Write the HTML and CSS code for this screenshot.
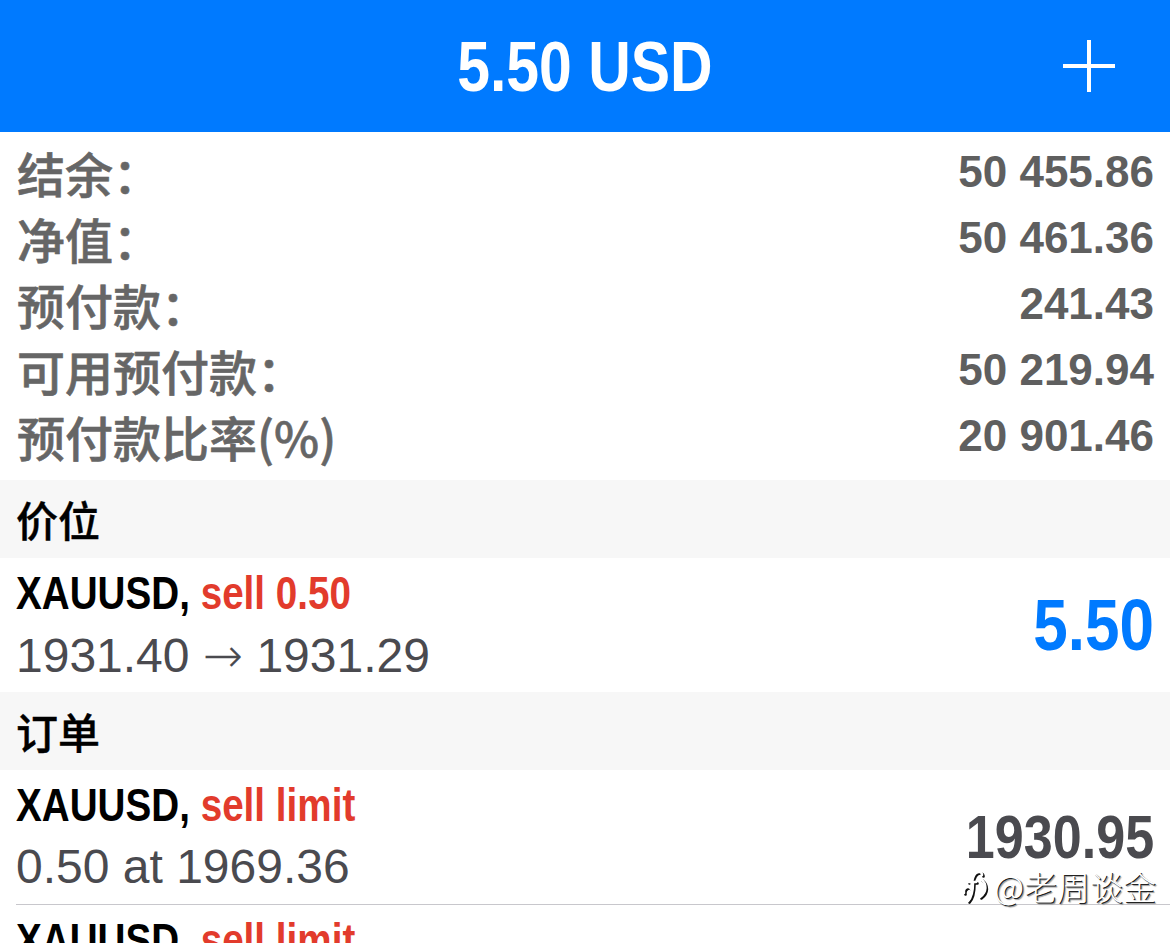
FILE: index.html
```html
<!DOCTYPE html>
<html lang="zh-CN">

<head>
    <meta charset="UTF-8">
    <title>交易</title>
    <link rel="stylesheet" href="styles.css">
</head>

<body>
    <div class="app">
        <header class="topbar">
            <div></div>
            <h1 class="topbar-title">5.50 USD</h1>
            <button class="add-btn" type="button">
                <svg width="56" height="56" viewBox="0 0 56 56">
                    <path d="M28 2 V54 M2 28 H54" stroke="#fff" stroke-width="4" fill="none" />
                </svg>
            </button>
        </header>

        <section class="summary">
            <div class="summary-row"><span class="label">结余：</span><span class="value">50 455.86</span></div>
            <div class="summary-row"><span class="label">净值：</span><span class="value">50 461.36</span></div>
            <div class="summary-row"><span class="label">预付款：</span><span class="value">241.43</span></div>
            <div class="summary-row"><span class="label">可用预付款：</span><span class="value">50 219.94</span></div>
            <div class="summary-row"><span class="label">预付款比率(%)</span><span class="value">20 901.46</span></div>
        </section>

        <div class="section-title">价位</div>
        <div class="trade-list">
            <div class="trade-row">
                <div class="trade-body">
                    <div class="trade-info">
                        <div class="trade-head"><span class="symbol">XAUUSD,</span> <span class="side">sell 0.50</span></div>
                        <div class="trade-sub">1931.40 <span class="arrow">→</span> 1931.29</div>
                    </div>
                    <div class="trade-value profit">5.50</div>
                </div>
            </div>
        </div>

        <div class="section-title">订单</div>
        <div class="trade-list">
            <div class="trade-row">
                <div class="trade-body">
                    <div class="trade-info">
                        <div class="trade-head"><span class="symbol">XAUUSD,</span> <span class="side">sell limit</span></div>
                        <div class="trade-sub">0.50 at 1969.36</div>
                    </div>
                    <div class="trade-value">1930.95</div>
                </div>
            </div>
            <div class="trade-row">
                <div class="trade-body">
                    <div class="trade-info">
                        <div class="trade-head"><span class="symbol">XAUUSD,</span> <span class="side">sell limit</span></div>
                        <div class="trade-sub">0.50 at 1975.20</div>
                    </div>
                    <div class="trade-value">1930.95</div>
                </div>
            </div>
        </div>

        <!-- watermark over the list -->
        <div class="watermark">
            <svg width="30" height="36" viewBox="0 0 30 36">
                <g fill="none" stroke-linecap="round" stroke-width="2.6">
                    <path d="M4 25 C3 19 9 17 11 21 M11 21 C12 14 12 8 16 5 C19 3 22 4 22 7 M8 14 H16 M13 14 C13 22 12 29 8 33 M21 11 C27 16 27 24 20 29"
                        stroke="#111" transform="translate(1.5 1.5)" />
                    <path d="M4 25 C3 19 9 17 11 21 M11 21 C12 14 12 8 16 5 C19 3 22 4 22 7 M8 14 H16 M13 14 C13 22 12 29 8 33 M21 11 C27 16 27 24 20 29"
                        stroke="#fff" />
                </g>
            </svg>
            <span>@老周谈金</span>
        </div>
    </div>
</body>

</html>
```

FILE: styles.css
```css
html,
body {
    margin: 0;
    height: 100%;
    overflow: hidden;
}

body {
    background: #fff;
    font-family: "Liberation Sans", Arial, "Noto Sans CJK SC", sans-serif;
}

.app {
    position: relative;
    height: 100%;
}

.topbar {
    display: grid;
    grid-template-columns: 1fr auto 1fr;
    align-items: center;
    height: 132px;
    background-color: #007aff;
    /* iOS blue */
}

/* no condensed face installed, so squeeze the bold one */
.topbar-title {
    margin: 0;
    color: #fff;
    font-weight: bold;
    font-size: 71px;
    transform: scaleX(0.83);
}

.add-btn {
    justify-self: end;
    margin-right: 53px;
    padding: 0;
    border: none;
    background: none;
    display: flex;
}

.summary {
    padding: 7px 16px 11px 17px;
}

.summary-row {
    display: flex;
    justify-content: space-between;
    align-items: center;
    height: 66px;
}

.label {
    font-family: "Noto Sans CJK SC", sans-serif;
    font-weight: 500;
    font-size: 48px;
    color: #666;
    -webkit-text-stroke: 0.6px #666;
}

.value {
    font-weight: bold;
    font-size: 44px;
    color: #5f5f5f;
}

.section-title {
    height: 78px;
    line-height: 78px;
    padding-left: 16px;
    background-color: #f7f7f7;
    font-family: "Noto Sans CJK SC", sans-serif;
    font-weight: 500;
    font-size: 42px;
    color: #000;
    -webkit-text-stroke: 0.4px #000;
}

.trade-row {
    padding-left: 16px;
}

.trade-body {
    display: flex;
    justify-content: space-between;
    align-items: center;
    padding: 4px 16px 6px 0;
}

.trade-row+.trade-row .trade-body {
    border-top: 1px solid #c8c7cc;
}

.trade-head {
    height: 62px;
    line-height: 62px;
    font-weight: bold;
    font-size: 46px;
    white-space: nowrap;
    transform: scaleX(0.84);
    transform-origin: left center;
}

.symbol {
    color: #000;
}

.side {
    color: #e23b2c;
}

.trade-sub {
    height: 62px;
    line-height: 62px;
    font-size: 48px;
    color: #4a4a4f;
    white-space: nowrap;
}

.arrow {
    font-family: "DejaVu Sans", sans-serif;
    font-weight: 200;
}

.trade-value {
    font-weight: bold;
    font-size: 62px;
    color: #4a4a4f;
    transform: scaleX(0.84);
    transform-origin: right center;
}

.trade-value.profit {
    font-size: 73px;
    color: #007aff;
    transform: scaleX(0.85);
}

.watermark {
    position: absolute;
    top: 862px;
    right: 14px;
    display: flex;
    align-items: center;
    gap: 4px;
    font-family: "Noto Sans CJK SC", sans-serif;
    font-weight: 300;
    font-size: 33px;
    color: #fff;
    text-shadow: 1px 1px 0 #222, 2px 2px 1px #999;
}
```
